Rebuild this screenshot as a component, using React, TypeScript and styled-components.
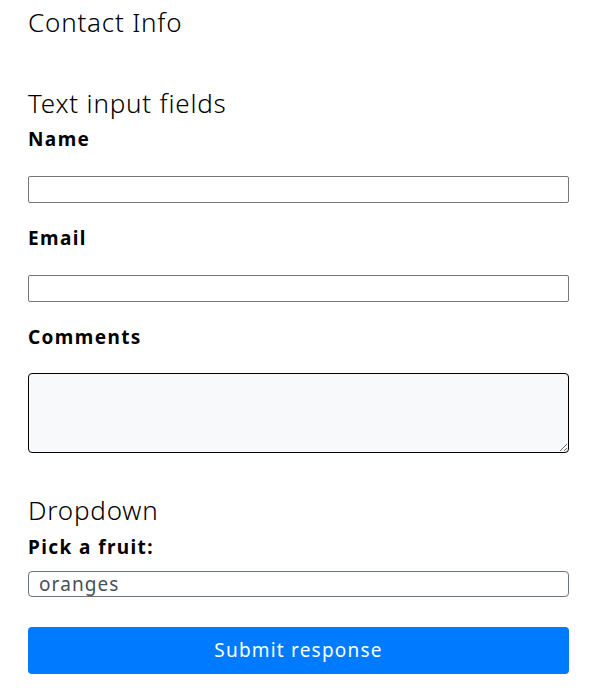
import React from "react";
import styled, { createGlobalStyle } from "styled-components";

const GlobalStyle = createGlobalStyle`
  body {
    margin: 0;
    padding: 0 29px 0 28px;
    background: #ffffff;
    color: #000000;
    font-family: "Noto Sans", "Open Sans", sans-serif;
  }
`;

const Form = styled.form`
  display: flex;
  flex-direction: column;
`;

const PageTitle = styled.h1`
  margin: 7px 0 50px;
  font-size: 26px;
  font-weight: 300;
  line-height: 1.2;
  letter-spacing: 0.8px;
`;

const SectionTitle = styled.h2`
  margin: 0 0 7px;
  font-size: 26px;
  font-weight: 300;
  line-height: 1.2;
  letter-spacing: 0.8px;
`;

const Field = styled.div<{ $last?: boolean }>`
  display: flex;
  flex-direction: column;
  margin-bottom: ${(p) => (p.$last ? "42px" : "22px")};
`;

const Label = styled.label<{ $gap?: number }>`
  display: block;
  font-size: 19px;
  font-weight: 700;
  line-height: 27px;
  letter-spacing: 1.4px;
  margin-bottom: ${(p) => p.$gap ?? 23}px;
`;

const TextInput = styled.input`
  box-sizing: border-box;
  height: 27px;
  border: 1px solid #767676;
  border-radius: 2px;
  padding: 0 4px;
  font: inherit;
`;

const TextArea = styled.textarea`
  box-sizing: border-box;
  height: 80px;
  border: 1px solid #000000;
  border-radius: 4px;
  background: #f8f9fa;
  resize: vertical;
  font: inherit;
`;

const Select = styled.select`
  box-sizing: border-box;
  height: 26px;
  border: 1px solid #6c757d;
  border-radius: 4px;
  padding: 0 10px;
  background: #ffffff;
  color: #495057;
  font-family: inherit;
  font-size: 19px;
  letter-spacing: 1.1px;
  line-height: 24px;
  appearance: none;
`;

const SubmitButton = styled.button`
  margin-top: 30px;
  height: 47px;
  border: none;
  border-radius: 4px;
  background: #007bff;
  color: #ffffff;
  font-family: inherit;
  font-size: 19px;
  font-weight: 400;
  letter-spacing: 1.2px;
  cursor: pointer;
`;

export default function App() {
  return (
    <>
      <GlobalStyle />
      <Form onSubmit={(e) => e.preventDefault()}>
        <PageTitle>Contact Info</PageTitle>
        <SectionTitle>Text input fields</SectionTitle>
        <Field>
          <Label htmlFor="name">Name</Label>
          <TextInput id="name" type="text" />
        </Field>
        <Field>
          <Label htmlFor="email">Email</Label>
          <TextInput id="email" type="email" />
        </Field>
        <Field $last>
          <Label htmlFor="comments" $gap={22}>
            Comments
          </Label>
          <TextArea id="comments" />
        </Field>
        <SectionTitle>Dropdown</SectionTitle>
        <Label htmlFor="fruit" $gap={10}>
          Pick a fruit:
        </Label>
        <Select id="fruit" defaultValue="oranges">
          <option value="apples">apples</option>
          <option value="oranges">oranges</option>
          <option value="bananas">bananas</option>
        </Select>
        <SubmitButton type="submit">Submit response</SubmitButton>
      </Form>
    </>
  );
}
